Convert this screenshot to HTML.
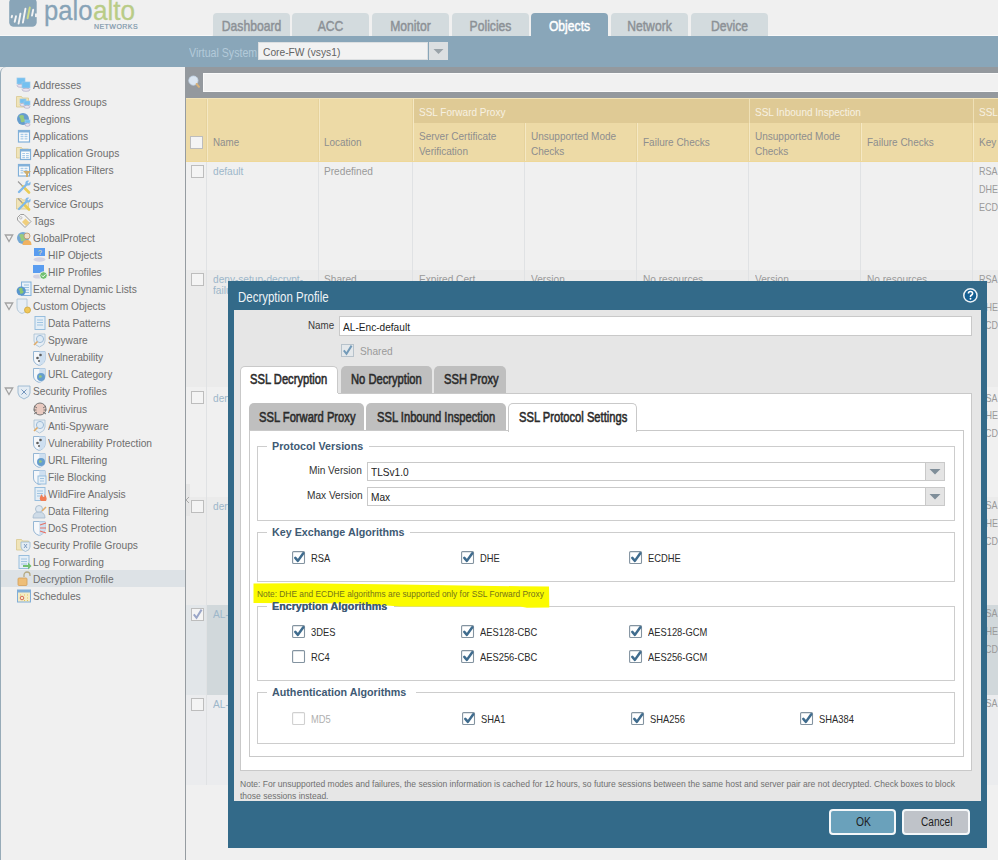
<!DOCTYPE html>
<html><head><meta charset="utf-8"><style>
html,body{margin:0;padding:0;width:998px;height:860px;overflow:hidden;background:#f0f0f0;}
body{position:relative;font-family:"Liberation Sans", sans-serif;}
.r{position:absolute;}
.t{position:absolute;white-space:nowrap;transform-origin:0 0;font-family:"Liberation Sans", sans-serif;}
</style></head><body>
<div class="r" style="left:0px;top:0px;width:998px;height:860px;background:#f0f0f0;"></div>
<svg class="r" style="left:0;top:0" width="150" height="34" viewBox="0 0 150 34">
<rect x="9.2" y="-2" width="27.5" height="28.7" rx="4.5" fill="#89a5b8"/>
<g stroke="#f4f4f4" stroke-width="1.9" stroke-linecap="round">
<line x1="11.6" y1="17.4" x2="12.1" y2="15.8"/>
<line x1="14.7" y1="21.8" x2="16" y2="16.2"/>
<line x1="18.6" y1="23.6" x2="20.4" y2="13.8"/>
<line x1="22.9" y1="22.6" x2="25.4" y2="8.8"/>
<line x1="32" y1="15.6" x2="33.2" y2="9.8"/>
</g>
<line x1="27.6" y1="18.2" x2="29.8" y2="7.5" stroke="#cfdc86" stroke-width="1.9" stroke-linecap="round"/>
<rect x="35" y="13.5" width="3" height="3.6" fill="#f0f0f0"/>
</svg>
<div class="t" style="left:43.8px;top:-2.78px;font-size:27.5px;line-height:27.5px;color:#87a3b7;font-weight:normal;transform:scaleX(0.93);-webkit-text-stroke:0.3px #87a3b7;">palo</div>
<div class="t" style="left:93.0px;top:-2.78px;font-size:27.5px;line-height:27.5px;color:#b9cc87;font-weight:normal;transform:scaleX(0.95);-webkit-text-stroke:0.3px #b9cc87;">alto</div>
<div class="t" style="left:94.0px;top:23.27px;font-size:7px;line-height:7px;color:#7f98ab;font-weight:normal;transform:scaleX(1.0);letter-spacing:0.45px;-webkit-text-stroke:0.2px #7f98ab;">NETWORKS</div>
<div class="r" style="left:212.5px;top:13px;width:77px;height:24px;background:#d3dbde;border-radius:4px 4px 0 0;"></div>
<div class="t" style="left:212.5px;top:18.2px;width:77px;text-align:center;font-size:15px;line-height:15px;color:#8c9196;font-weight:normal;-webkit-text-stroke:0.5px #8c9196;transform:scaleX(0.81);transform-origin:center;">Dashboard</div>
<div class="r" style="left:292.2px;top:13px;width:77px;height:24px;background:#d3dbde;border-radius:4px 4px 0 0;"></div>
<div class="t" style="left:292.2px;top:18.2px;width:77px;text-align:center;font-size:15px;line-height:15px;color:#8c9196;font-weight:normal;-webkit-text-stroke:0.5px #8c9196;transform:scaleX(0.81);transform-origin:center;">ACC</div>
<div class="r" style="left:371.8px;top:13px;width:77px;height:24px;background:#d3dbde;border-radius:4px 4px 0 0;"></div>
<div class="t" style="left:371.8px;top:18.2px;width:77px;text-align:center;font-size:15px;line-height:15px;color:#8c9196;font-weight:normal;-webkit-text-stroke:0.5px #8c9196;transform:scaleX(0.81);transform-origin:center;">Monitor</div>
<div class="r" style="left:451.5px;top:13px;width:77px;height:24px;background:#d3dbde;border-radius:4px 4px 0 0;"></div>
<div class="t" style="left:451.5px;top:18.2px;width:77px;text-align:center;font-size:15px;line-height:15px;color:#8c9196;font-weight:normal;-webkit-text-stroke:0.5px #8c9196;transform:scaleX(0.81);transform-origin:center;">Policies</div>
<div class="r" style="left:531.2px;top:13px;width:77px;height:24px;background:#89a6b9;border-radius:4px 4px 0 0;"></div>
<div class="t" style="left:531.2px;top:18.2px;width:77px;text-align:center;font-size:15px;line-height:15px;color:#ffffff;font-weight:normal;-webkit-text-stroke:0.5px #ffffff;transform:scaleX(0.81);transform-origin:center;">Objects</div>
<div class="r" style="left:610.9px;top:13px;width:77px;height:24px;background:#d3dbde;border-radius:4px 4px 0 0;"></div>
<div class="t" style="left:610.9px;top:18.2px;width:77px;text-align:center;font-size:15px;line-height:15px;color:#8c9196;font-weight:normal;-webkit-text-stroke:0.5px #8c9196;transform:scaleX(0.81);transform-origin:center;">Network</div>
<div class="r" style="left:690.5px;top:13px;width:77px;height:24px;background:#d3dbde;border-radius:4px 4px 0 0;"></div>
<div class="t" style="left:690.5px;top:18.2px;width:77px;text-align:center;font-size:15px;line-height:15px;color:#8c9196;font-weight:normal;-webkit-text-stroke:0.5px #8c9196;transform:scaleX(0.81);transform-origin:center;">Device</div>
<div class="r" style="left:0px;top:35px;width:212px;height:1px;background:#f8f8f8;"></div>
<div class="r" style="left:768px;top:35px;width:230px;height:1px;background:#f8f8f8;"></div>
<div class="r" style="left:0px;top:36px;width:998px;height:31px;background:#89a6b9;"></div>
<div class="t" style="left:188.5px;top:45.50px;font-size:13px;line-height:13px;color:#b3cad9;font-weight:normal;transform:scaleX(0.815);">Virtual System</div>
<div class="r" style="left:258px;top:42px;width:170px;height:18px;background:#f2f2f2;border:1px solid #dcdfe1;box-sizing:border-box;"></div>
<div class="t" style="left:262.5px;top:46.69px;font-size:11px;line-height:11px;color:#646464;font-weight:normal;transform:scaleX(0.93);">Core-FW (vsys1)</div>
<div class="r" style="left:429px;top:42px;width:19px;height:18px;background:#dcdfe1;"></div>
<svg class="r" style="left:429px;top:42px" width="19" height="18"><path d="M4.5 7 L14.5 7 L9.5 12 Z" fill="#9aa3a9"/></svg>
<div class="r" style="left:0;top:67px;width:185px;height:800px;background:#f0f0f0;border-left:1.5px solid #97abb8;border-top-left-radius:6px;box-sizing:border-box;"></div>
<div class="r" style="left:1px;top:570px;width:184px;height:17px;background:#dde2e6;"></div>
<svg class="r" style="left:16px;top:76.7px;opacity:0.85" width="16" height="16" viewBox="0 0 16 16"><rect x="1" y="1" width="8" height="6" fill="#5fb8f0" stroke="#8cc4ea" stroke-width="0.7"/><ellipse cx="5.0" cy="8.8" rx="4.0" ry="1.5" fill="#e6e2f0" stroke="#9a93b8" stroke-width="0.6"/><rect x="6" y="5" width="8" height="6" fill="#5fb8f0" stroke="#8cc4ea" stroke-width="0.7"/><ellipse cx="10.0" cy="12.8" rx="4.0" ry="1.5" fill="#e6e2f0" stroke="#9a93b8" stroke-width="0.6"/></svg>
<div class="t" style="left:33.3px;top:79.59px;font-size:11px;line-height:11px;color:#6e6e6e;font-weight:normal;transform:scaleX(0.928);">Addresses</div>
<svg class="r" style="left:16px;top:93.8px;opacity:0.85" width="16" height="16" viewBox="0 0 16 16"><path d="M0.5 2.5 h5 l1 1.5 h6 v9 h-12 z" fill="#f1e3b0" stroke="#d6c27e" stroke-width="0.8"/><rect x="4" y="5" width="6" height="4" fill="#5fb8f0" stroke="#8cc4ea" stroke-width="0.7"/><ellipse cx="7.0" cy="10.8" rx="3.0" ry="1.5" fill="#e6e2f0" stroke="#9a93b8" stroke-width="0.6"/><rect x="8" y="7" width="6" height="4" fill="#5fb8f0" stroke="#8cc4ea" stroke-width="0.7"/><ellipse cx="11.0" cy="12.8" rx="3.0" ry="1.5" fill="#e6e2f0" stroke="#9a93b8" stroke-width="0.6"/></svg>
<div class="t" style="left:33.3px;top:96.64px;font-size:11px;line-height:11px;color:#6e6e6e;font-weight:normal;transform:scaleX(0.928);">Address Groups</div>
<svg class="r" style="left:16px;top:110.8px;opacity:0.85" width="16" height="16" viewBox="0 0 16 16"><circle cx="7" cy="8" r="6" fill="#4f8fc8"/><path d="M3 5 q3 -2 5 0 q-1 3 2 4 q-2 3 -5 2 q0 -3 -2 -6z" fill="#88c46a"/><rect x="9" y="9" width="5" height="3" fill="#5fb8f0" stroke="#8cc4ea" stroke-width="0.7"/><ellipse cx="11.5" cy="13.8" rx="2.5" ry="1.5" fill="#e6e2f0" stroke="#9a93b8" stroke-width="0.6"/></svg>
<div class="t" style="left:33.3px;top:113.69px;font-size:11px;line-height:11px;color:#6e6e6e;font-weight:normal;transform:scaleX(0.928);">Regions</div>
<svg class="r" style="left:16px;top:127.9px;opacity:0.85" width="16" height="16" viewBox="0 0 16 16"><rect x="2.5" y="2.5" width="11" height="11.5" fill="#ffffff" stroke="#6ea5d5" stroke-width="1.2"/><rect x="2.5" y="2.5" width="11" height="2" fill="#6ea5d5"/><path d="M4.5 6.5h3M8.5 6.5h3M4.5 8.7h3M8.5 8.7h3M4.5 10.9h3M8.5 10.9h3" stroke="#9cc5e8" stroke-width="1.3"/></svg>
<div class="t" style="left:33.3px;top:130.74px;font-size:11px;line-height:11px;color:#6e6e6e;font-weight:normal;transform:scaleX(0.928);">Applications</div>
<svg class="r" style="left:16px;top:144.9px;opacity:0.85" width="16" height="16" viewBox="0 0 16 16"><path d="M0.5 2.5 h5 l1 1.5 h6 v9 h-12 z" fill="#f1e3b0" stroke="#d6c27e" stroke-width="0.8"/><rect x="4.5" y="4.5" width="10" height="10" fill="#ffffff" stroke="#6ea5d5" stroke-width="1.2"/><rect x="4.5" y="4.5" width="10" height="2" fill="#6ea5d5"/><path d="M6.3 8.5h2.8M10 8.5h2.8M6.3 10.6h2.8M10 10.6h2.8M6.3 12.7h2.8M10 12.7h2.8" stroke="#9cc5e8" stroke-width="1.2"/></svg>
<div class="t" style="left:33.3px;top:147.79px;font-size:11px;line-height:11px;color:#6e6e6e;font-weight:normal;transform:scaleX(0.928);">Application Groups</div>
<svg class="r" style="left:16px;top:161.9px;opacity:0.85" width="16" height="16" viewBox="0 0 16 16"><rect x="2.5" y="2.5" width="11" height="11.5" fill="#ffffff" stroke="#6ea5d5" stroke-width="1.2"/><rect x="2.5" y="2.5" width="11" height="2" fill="#6ea5d5"/><path d="M4.5 6.5h3M8.5 6.5h3M4.5 8.7h3M8.5 8.7h3M4.5 10.9h3M8.5 10.9h3" stroke="#9cc5e8" stroke-width="1.3"/><path d="M7 9 h8 l-3 3 v3 h-2 v-3 z" fill="#c9a35a"/></svg>
<div class="t" style="left:33.3px;top:164.84px;font-size:11px;line-height:11px;color:#6e6e6e;font-weight:normal;transform:scaleX(0.928);">Application Filters</div>
<svg class="r" style="left:16px;top:179.0px;opacity:0.85" width="16" height="16" viewBox="0 0 16 16"><path d="M2 2.5 l5 5" stroke="#8a8a8a" stroke-width="1.1"/><path d="M7 7.5 l6 6" stroke="#e8c63a" stroke-width="2.6" stroke-linecap="round"/><path d="M12.5 3.5 l-9.5 9.5" stroke="#6eb0e8" stroke-width="2.4" stroke-linecap="round"/><circle cx="12" cy="4" r="2.6" fill="#6eb0e8"/><path d="M12 4 l2.5 -2.5" stroke="#f0f0f0" stroke-width="1.4"/></svg>
<div class="t" style="left:33.3px;top:181.89px;font-size:11px;line-height:11px;color:#6e6e6e;font-weight:normal;transform:scaleX(0.928);">Services</div>
<svg class="r" style="left:16px;top:196.1px;opacity:0.85" width="16" height="16" viewBox="0 0 16 16"><path d="M0.5 2.5 h5 l1 1.5 h6 v9 h-12 z" fill="#f1e3b0" stroke="#d6c27e" stroke-width="0.8"/><path d="M2 2.5 l5 5" stroke="#8a8a8a" stroke-width="1.1"/><path d="M7 7.5 l6 6" stroke="#e8c63a" stroke-width="2.6" stroke-linecap="round"/><path d="M12.5 3.5 l-9.5 9.5" stroke="#6eb0e8" stroke-width="2.4" stroke-linecap="round"/><circle cx="12" cy="4" r="2.6" fill="#6eb0e8"/><path d="M12 4 l2.5 -2.5" stroke="#f0f0f0" stroke-width="1.4"/></svg>
<div class="t" style="left:33.3px;top:198.94px;font-size:11px;line-height:11px;color:#6e6e6e;font-weight:normal;transform:scaleX(0.928);">Service Groups</div>
<svg class="r" style="left:16px;top:213.1px;opacity:0.85" width="16" height="16" viewBox="0 0 16 16"><path d="M1.5 4.5 l3-3 h3.5 l7 7 -6 6 -7.5-7.5 z" fill="#f4f4f4" stroke="#8f8f8f" stroke-width="1"/><path d="M6 9 l3.5-3.5 l4 4 -3.5 3.5 z" fill="#f0c968"/><circle cx="4.8" cy="4.8" r="1.2" fill="#fff" stroke="#999" stroke-width="0.7"/></svg>
<div class="t" style="left:33.3px;top:215.99px;font-size:11px;line-height:11px;color:#6e6e6e;font-weight:normal;transform:scaleX(0.928);">Tags</div>
<svg class="r" style="left:16px;top:230.2px;opacity:0.85" width="16" height="16" viewBox="0 0 16 16"><circle cx="7" cy="8" r="6" fill="#5f9bd0"/><path d="M3 5 q3 -2 5 0 q-1 3 2 4 q-2 3 -5 2 q0 -3 -2 -6z" fill="#8cc56a"/><circle cx="11" cy="6" r="3" fill="#f2dcc0" stroke="#b48b5c" stroke-width="0.9"/><path d="M6.5 15 q0 -5 4.5 -5 q4.5 0 4.5 5z" fill="#f0a848"/></svg>
<svg class="r" style="left:4px;top:232.9px" width="10" height="10" viewBox="0 0 10 10"><path d="M1.3 2 L8.7 2 L5 8.5 Z" fill="none" stroke="#a2a2a2" stroke-width="1.3"/></svg>
<div class="t" style="left:33.3px;top:233.04px;font-size:11px;line-height:11px;color:#6e6e6e;font-weight:normal;transform:scaleX(0.928);">GlobalProtect</div>
<svg class="r" style="left:32px;top:247.2px;opacity:0.85" width="16" height="16" viewBox="0 0 16 16"><rect x="2" y="1" width="11" height="8" fill="#3f8ef0"/><text x="6" y="7.5" font-size="7" fill="#ffe680" font-family="Liberation Sans">?</text><ellipse cx="7.5" cy="12.5" rx="6" ry="2.2" fill="#cfcde0"/></svg>
<div class="t" style="left:48.4px;top:250.09px;font-size:11px;line-height:11px;color:#6e6e6e;font-weight:normal;transform:scaleX(0.928);">HIP Objects</div>
<svg class="r" style="left:32px;top:264.2px;opacity:0.85" width="16" height="16" viewBox="0 0 16 16"><rect x="1" y="1" width="11" height="8" fill="#3f8ef0"/><ellipse cx="6" cy="12.5" rx="5" ry="2" fill="#cfcde0"/><circle cx="11.5" cy="11.5" r="3.8" fill="#5cb85c" stroke="#fff" stroke-width="0.8"/><path d="M9.8 11.5 l1.3 1.3 2.3-2.4" stroke="#fff" stroke-width="1" fill="none"/></svg>
<div class="t" style="left:48.4px;top:267.14px;font-size:11px;line-height:11px;color:#6e6e6e;font-weight:normal;transform:scaleX(0.928);">HIP Profiles</div>
<svg class="r" style="left:16px;top:281.3px;opacity:0.85" width="16" height="16" viewBox="0 0 16 16"><rect x="5.5" y="1" width="9.5" height="13.5" fill="#e8f2fb" stroke="#6fa6d6" stroke-width="1"/><path d="M8 4h5M8 6.5h5M8 9h5M8 11.5h5" stroke="#7fb0d8" stroke-width="0.9"/><circle cx="5.2" cy="10" r="4.6" fill="#3f86c8"/><path d="M2.5 8 q2 -2 4 -0.5 q-0.5 2.5 1.5 3 q-1.5 3 -4 2 q0.5 -2.5 -1.5 -4.5z" fill="#7cc05a"/></svg>
<div class="t" style="left:33.3px;top:284.19px;font-size:11px;line-height:11px;color:#6e6e6e;font-weight:normal;transform:scaleX(0.928);">External Dynamic Lists</div>
<svg class="r" style="left:16px;top:298.3px;opacity:0.85" width="16" height="16" viewBox="0 0 16 16"><path d="M1 1 h10 v8 q0 5 -5 6.5 q-5 -1.5 -5 -6.5 z" fill="#e6eef6" stroke="#9bb8cf" stroke-width="0.8"/><circle cx="11.5" cy="12" r="3" fill="#f0c040" stroke="#c89a20" stroke-width="0.8"/></svg>
<svg class="r" style="left:4px;top:301.0px" width="10" height="10" viewBox="0 0 10 10"><path d="M1.3 2 L8.7 2 L5 8.5 Z" fill="none" stroke="#a2a2a2" stroke-width="1.3"/></svg>
<div class="t" style="left:33.3px;top:301.24px;font-size:11px;line-height:11px;color:#6e6e6e;font-weight:normal;transform:scaleX(0.928);">Custom Objects</div>
<svg class="r" style="left:32px;top:315.4px;opacity:0.85" width="16" height="16" viewBox="0 0 16 16"><rect x="3" y="1.5" width="10" height="13" fill="#e3eef8" stroke="#7fb0d8" stroke-width="0.9"/><path d="M5 5h6M5 7.5h6M5 10h6" stroke="#7fb0d8" stroke-width="0.8"/></svg>
<div class="t" style="left:48.4px;top:318.29px;font-size:11px;line-height:11px;color:#6e6e6e;font-weight:normal;transform:scaleX(0.928);">Data Patterns</div>
<svg class="r" style="left:32px;top:332.4px;opacity:0.85" width="16" height="16" viewBox="0 0 16 16"><path d="M2 2 h11 v7 q0 4 -5.5 6 q-5.5 -2 -5.5 -6 z" fill="#e6eef6" stroke="#9bb8cf" stroke-width="0.8"/><circle cx="8" cy="7" r="3.6" fill="#dce9f5" stroke="#8fb3d3" stroke-width="1"/><path d="M5.5 9.5 l-3.5 3.5" stroke="#e0a050" stroke-width="1.6"/></svg>
<div class="t" style="left:48.4px;top:335.34px;font-size:11px;line-height:11px;color:#6e6e6e;font-weight:normal;transform:scaleX(0.928);">Spyware</div>
<svg class="r" style="left:32px;top:349.5px;opacity:0.85" width="16" height="16" viewBox="0 0 16 16"><path d="M1.5 1.5 h11.5 v7.5 q0 4.5 -5.75 6.5 q-5.75 -2 -5.75 -6.5 z" fill="#f6f9fc" stroke="#86acd0" stroke-width="1"/><path d="M7.25 1.5 h5.75 v7.5 q0 4.5 -5.75 6.5 z" fill="#c9ddf1"/><circle cx="5.5" cy="8" r="1.3" fill="#444"/><circle cx="8.5" cy="5" r="1.3" fill="#444"/><circle cx="7" cy="11" r="1" fill="#444"/></svg>
<div class="t" style="left:48.4px;top:352.39px;font-size:11px;line-height:11px;color:#6e6e6e;font-weight:normal;transform:scaleX(0.928);">Vulnerability</div>
<svg class="r" style="left:32px;top:366.6px;opacity:0.85" width="16" height="16" viewBox="0 0 16 16"><path d="M1.5 1.5 h11.5 v7.5 q0 4.5 -5.75 6.5 q-5.75 -2 -5.75 -6.5 z" fill="#f6f9fc" stroke="#86acd0" stroke-width="1"/><path d="M7.25 1.5 h5.75 v7.5 q0 4.5 -5.75 6.5 z" fill="#c9ddf1"/><circle cx="9" cy="10" r="4" fill="#4f8fc8"/><path d="M7 8.5 q2 -1 3 1 q-1 2 -3 1z" fill="#88c46a"/></svg>
<div class="t" style="left:48.4px;top:369.44px;font-size:11px;line-height:11px;color:#6e6e6e;font-weight:normal;transform:scaleX(0.928);">URL Category</div>
<svg class="r" style="left:16px;top:383.6px;opacity:0.85" width="16" height="16" viewBox="0 0 16 16"><path d="M2 2 h12 v7 q0 4 -6 6 q-6 -2 -6 -6 z" fill="#e2ecf4" stroke="#8aaecb" stroke-width="0.9"/><path d="M5.5 5.5 l5 5 M10.5 5.5 l-5 5" stroke="#5f86b4" stroke-width="1"/></svg>
<svg class="r" style="left:4px;top:386.3px" width="10" height="10" viewBox="0 0 10 10"><path d="M1.3 2 L8.7 2 L5 8.5 Z" fill="none" stroke="#a2a2a2" stroke-width="1.3"/></svg>
<div class="t" style="left:33.3px;top:386.49px;font-size:11px;line-height:11px;color:#6e6e6e;font-weight:normal;transform:scaleX(0.928);">Security Profiles</div>
<svg class="r" style="left:32px;top:400.6px;opacity:0.85" width="16" height="16" viewBox="0 0 16 16"><circle cx="8" cy="8" r="6" fill="#e8c4b8" stroke="#555" stroke-width="0.9"/><path d="M2 5 l3 2 M14 5 l-3 2 M1.5 9 h3 M14.5 9 h-3 M2 13 l3 -2 M14 13 l-3 -2" stroke="#555" stroke-width="0.9"/></svg>
<div class="t" style="left:48.4px;top:403.54px;font-size:11px;line-height:11px;color:#6e6e6e;font-weight:normal;transform:scaleX(0.928);">Antivirus</div>
<svg class="r" style="left:32px;top:417.7px;opacity:0.85" width="16" height="16" viewBox="0 0 16 16"><path d="M2 2 h11 v7 q0 4 -5.5 6 q-5.5 -2 -5.5 -6 z" fill="#e6eef6" stroke="#9bb8cf" stroke-width="0.8"/><circle cx="8" cy="7" r="3.6" fill="#dce9f5" stroke="#8fb3d3" stroke-width="1"/><path d="M5.5 9.5 l-3.5 3.5" stroke="#e0a050" stroke-width="1.6"/></svg>
<div class="t" style="left:48.4px;top:420.59px;font-size:11px;line-height:11px;color:#6e6e6e;font-weight:normal;transform:scaleX(0.928);">Anti-Spyware</div>
<svg class="r" style="left:32px;top:434.8px;opacity:0.85" width="16" height="16" viewBox="0 0 16 16"><path d="M1.5 1.5 h11.5 v7.5 q0 4.5 -5.75 6.5 q-5.75 -2 -5.75 -6.5 z" fill="#f6f9fc" stroke="#86acd0" stroke-width="1"/><path d="M7.25 1.5 h5.75 v7.5 q0 4.5 -5.75 6.5 z" fill="#c9ddf1"/><circle cx="5.5" cy="8" r="1.3" fill="#444"/><circle cx="8.5" cy="5" r="1.3" fill="#444"/><circle cx="7" cy="11" r="1" fill="#444"/></svg>
<div class="t" style="left:48.4px;top:437.64px;font-size:11px;line-height:11px;color:#6e6e6e;font-weight:normal;transform:scaleX(0.928);">Vulnerability Protection</div>
<svg class="r" style="left:32px;top:451.8px;opacity:0.85" width="16" height="16" viewBox="0 0 16 16"><path d="M1.5 1.5 h11.5 v7.5 q0 4.5 -5.75 6.5 q-5.75 -2 -5.75 -6.5 z" fill="#f6f9fc" stroke="#86acd0" stroke-width="1"/><path d="M7.25 1.5 h5.75 v7.5 q0 4.5 -5.75 6.5 z" fill="#c9ddf1"/><circle cx="9" cy="10" r="4" fill="#4f8fc8"/><path d="M7 8.5 q2 -1 3 1 q-1 2 -3 1z" fill="#88c46a"/></svg>
<div class="t" style="left:48.4px;top:454.69px;font-size:11px;line-height:11px;color:#6e6e6e;font-weight:normal;transform:scaleX(0.928);">URL Filtering</div>
<svg class="r" style="left:32px;top:468.9px;opacity:0.85" width="16" height="16" viewBox="0 0 16 16"><path d="M1.5 1.5 h11.5 v7.5 q0 4.5 -5.75 6.5 q-5.75 -2 -5.75 -6.5 z" fill="#f6f9fc" stroke="#86acd0" stroke-width="1"/><path d="M7.25 1.5 h5.75 v7.5 q0 4.5 -5.75 6.5 z" fill="#c9ddf1"/><rect x="6" y="7" width="8" height="8" fill="#e3eef8" stroke="#7fb0d8" stroke-width="0.9"/><path d="M8 9.5h4M8 12h4" stroke="#7fb0d8" stroke-width="0.8"/></svg>
<div class="t" style="left:48.4px;top:471.74px;font-size:11px;line-height:11px;color:#6e6e6e;font-weight:normal;transform:scaleX(0.928);">File Blocking</div>
<svg class="r" style="left:32px;top:485.9px;opacity:0.85" width="16" height="16" viewBox="0 0 16 16"><rect x="3" y="1.5" width="10" height="13" fill="#e3eef8" stroke="#7fb0d8" stroke-width="0.9"/><path d="M5 5h6M5 7.5h6M5 10h6" stroke="#7fb0d8" stroke-width="0.8"/><path d="M9 15 q-3 -3 1 -7 q0 3 2 3 q1 -1 0 -3 q4 3 2 7z" fill="#f26a3a"/></svg>
<div class="t" style="left:48.4px;top:488.79px;font-size:11px;line-height:11px;color:#6e6e6e;font-weight:normal;transform:scaleX(0.928);">WildFire Analysis</div>
<svg class="r" style="left:32px;top:502.9px;opacity:0.85" width="16" height="16" viewBox="0 0 16 16"><circle cx="7" cy="6" r="3.5" fill="#dbe6f0" stroke="#98b0c6" stroke-width="0.9"/><path d="M1 15 q0 -6 6 -6 q6 0 6 6z" fill="#c9d8e6" stroke="#98b0c6" stroke-width="0.8"/><path d="M10 8 l4 -4" stroke="#e0a050" stroke-width="1.5"/></svg>
<div class="t" style="left:48.4px;top:505.84px;font-size:11px;line-height:11px;color:#6e6e6e;font-weight:normal;transform:scaleX(0.928);">Data Filtering</div>
<svg class="r" style="left:32px;top:520.0px;opacity:0.85" width="16" height="16" viewBox="0 0 16 16"><path d="M1.5 1.5 h11.5 v7.5 q0 4.5 -5.75 6.5 q-5.75 -2 -5.75 -6.5 z" fill="#f6f9fc" stroke="#86acd0" stroke-width="1"/><path d="M7.25 1.5 h5.75 v7.5 q0 4.5 -5.75 6.5 z" fill="#c9ddf1"/><path d="M8 5 l6 -2 M8 8 l6 0 M8 11 l6 2" stroke="#e85a4a" stroke-width="1.1"/></svg>
<div class="t" style="left:48.4px;top:522.89px;font-size:11px;line-height:11px;color:#6e6e6e;font-weight:normal;transform:scaleX(0.928);">DoS Protection</div>
<svg class="r" style="left:16px;top:537.1px;opacity:0.85" width="16" height="16" viewBox="0 0 16 16"><path d="M0.5 2.5 h5 l1 1.5 h6 v9 h-12 z" fill="#f1e3b0" stroke="#d6c27e" stroke-width="0.8"/><path d="M5 5 h9 v5 q0 3 -4.5 4.5 q-4.5 -1.5 -4.5 -4.5 z" fill="#e2ecf4" stroke="#8aaecb" stroke-width="0.8"/><path d="M8 7 l3 4 M11 7 l-3 4" stroke="#5f86b4" stroke-width="0.9"/></svg>
<div class="t" style="left:33.3px;top:539.94px;font-size:11px;line-height:11px;color:#6e6e6e;font-weight:normal;transform:scaleX(0.928);">Security Profile Groups</div>
<svg class="r" style="left:16px;top:554.1px;opacity:0.85" width="16" height="16" viewBox="0 0 16 16"><rect x="3" y="1.5" width="10" height="13" fill="#e3eef8" stroke="#7fb0d8" stroke-width="0.9"/><path d="M5 5h6M5 7.5h6M5 10h6" stroke="#7fb0d8" stroke-width="0.8"/><path d="M7 11 h5 v-2.5 l3.5 3.5 -3.5 3.5 v-2.5 h-5z" fill="#5cb85c"/></svg>
<div class="t" style="left:33.3px;top:556.99px;font-size:11px;line-height:11px;color:#6e6e6e;font-weight:normal;transform:scaleX(0.928);">Log Forwarding</div>
<svg class="r" style="left:16px;top:571.2px;opacity:0.85" width="16" height="16" viewBox="0 0 16 16"><path d="M8 6 v-2 a3 3 0 0 1 6 0 v1" stroke="#b0a070" stroke-width="1.3" fill="none"/><rect x="2" y="7" width="9" height="7.5" rx="1" fill="#f1b865" stroke="#d29443" stroke-width="0.8"/></svg>
<div class="t" style="left:33.3px;top:574.04px;font-size:11px;line-height:11px;color:#6e6e6e;font-weight:normal;transform:scaleX(0.928);">Decryption Profile</div>
<svg class="r" style="left:16px;top:588.2px;opacity:0.85" width="16" height="16" viewBox="0 0 16 16"><rect x="1.5" y="2" width="13" height="12" fill="#f5ebc0" stroke="#6ea3d4" stroke-width="1"/><rect x="1.5" y="2" width="13" height="2.5" fill="#6ea3d4"/><circle cx="6" cy="10" r="1.8" fill="none" stroke="#d0503a" stroke-width="1"/><path d="M4 7h1M8 7h1M11 7h1M11 10h1M8 12.5h1M11 12.5h1" stroke="#e0c040" stroke-width="1"/></svg>
<div class="t" style="left:33.3px;top:591.09px;font-size:11px;line-height:11px;color:#6e6e6e;font-weight:normal;transform:scaleX(0.928);">Schedules</div>
<div class="r" style="left:185px;top:67px;width:813px;height:31px;background:#94999e;"></div>
<div class="r" style="left:203px;top:73px;width:800px;height:19px;background:#f1f1f1;border:1px solid #fafafa;box-sizing:border-box;"></div>
<svg class="r" style="left:186px;top:73px" width="16" height="18" viewBox="0 0 16 18"><circle cx="7.4" cy="7.6" r="4.6" fill="#dbe6f1" stroke="#c4d6e8" stroke-width="0.8"/><path d="M10.6 11 L13 13.8" stroke="#d9b27a" stroke-width="2" stroke-linecap="round"/></svg>
<div class="r" style="left:185px;top:98px;width:813px;height:762px;background:#f0f0f0;"></div>
<div class="r" style="left:186px;top:162px;width:812px;height:108px;background:#f0f0f0;"></div>
<div class="r" style="left:186px;top:270px;width:812px;height:117px;background:#ebebeb;"></div>
<div class="r" style="left:186px;top:387px;width:812px;height:110px;background:#f0f0f0;"></div>
<div class="r" style="left:186px;top:497px;width:812px;height:108px;background:#ebebeb;"></div>
<div class="r" style="left:186px;top:605px;width:812px;height:90px;background:#d1d8db;"></div>
<div class="r" style="left:186px;top:695px;width:812px;height:90px;background:#ebecee;"></div>
<div class="r" style="left:186px;top:605px;width:21px;height:90px;background:#e2e6e9;"></div>
<div class="r" style="left:206px;top:162px;width:1px;height:623px;background:#e0e2e4;"></div>
<div class="r" style="left:318px;top:162px;width:1px;height:623px;background:#e0e2e4;"></div>
<div class="r" style="left:412px;top:162px;width:1px;height:623px;background:#e0e2e4;"></div>
<div class="r" style="left:524px;top:162px;width:1px;height:623px;background:#e0e2e4;"></div>
<div class="r" style="left:636px;top:162px;width:1px;height:623px;background:#e0e2e4;"></div>
<div class="r" style="left:748px;top:162px;width:1px;height:623px;background:#e0e2e4;"></div>
<div class="r" style="left:860px;top:162px;width:1px;height:623px;background:#e0e2e4;"></div>
<div class="r" style="left:972px;top:162px;width:1px;height:623px;background:#e0e2e4;"></div>
<div class="r" style="left:185px;top:98px;width:1px;height:762px;background:#969ca1;"></div>
<div class="r" style="left:186px;top:98px;width:812px;height:64px;background:#eddaa6;"></div>
<div class="r" style="left:413px;top:99px;width:585px;height:24px;background:#dfca95;"></div>
<div class="r" style="left:207px;top:99px;width:1px;height:63px;background:#f5e8c3;"></div>
<div class="r" style="left:319px;top:99px;width:1px;height:63px;background:#f5e8c3;"></div>
<div class="r" style="left:413px;top:99px;width:1px;height:63px;background:#f5e8c3;"></div>
<div class="r" style="left:525px;top:123px;width:1px;height:39px;background:#f5e8c3;"></div>
<div class="r" style="left:637px;top:123px;width:1px;height:39px;background:#f5e8c3;"></div>
<div class="r" style="left:749px;top:123px;width:1px;height:39px;background:#f5e8c3;"></div>
<div class="r" style="left:861px;top:123px;width:1px;height:39px;background:#f5e8c3;"></div>
<div class="r" style="left:973px;top:123px;width:1px;height:39px;background:#f5e8c3;"></div>
<div class="r" style="left:749px;top:99px;width:1px;height:24px;background:#efe0b6;"></div>
<div class="r" style="left:973px;top:99px;width:1px;height:24px;background:#efe0b6;"></div>
<div class="r" style="left:186px;top:98px;width:812px;height:1px;background:#f3e4b8;"></div>
<div class="r" style="left:186px;top:161px;width:812px;height:1px;background:#efd898;"></div>
<div class="r" style="left:206px;top:99px;width:1px;height:62px;background:#e6d29c;"></div>
<div class="r" style="left:318px;top:99px;width:1px;height:62px;background:#e6d29c;"></div>
<div class="r" style="left:412px;top:99px;width:1px;height:62px;background:#e6d29c;"></div>
<div class="r" style="left:524px;top:123px;width:1px;height:38px;background:#e6d29c;"></div>
<div class="r" style="left:636px;top:123px;width:1px;height:38px;background:#e6d29c;"></div>
<div class="r" style="left:748px;top:123px;width:1px;height:38px;background:#e6d29c;"></div>
<div class="r" style="left:860px;top:123px;width:1px;height:38px;background:#e6d29c;"></div>
<div class="r" style="left:972px;top:123px;width:1px;height:38px;background:#e6d29c;"></div>
<svg class="r" style="left:190px;top:135.5px" width="13" height="13" viewBox="0 0 13 13"><rect x="0.5" y="0.5" width="12" height="12" fill="#f4f4f4" stroke="#bdbdbd" stroke-width="1"/></svg>
<div class="t" style="left:212.8px;top:137.09px;font-size:11px;line-height:11px;color:#8e8e8e;font-weight:normal;transform:scaleX(0.89);">Name</div>
<div class="t" style="left:323.8px;top:137.09px;font-size:11px;line-height:11px;color:#8e8e8e;font-weight:normal;transform:scaleX(0.9);">Location</div>
<div class="t" style="left:419.0px;top:106.69px;font-size:11px;line-height:11px;color:#f7f1e2;font-weight:normal;transform:scaleX(0.91);">SSL Forward Proxy</div>
<div class="t" style="left:755.0px;top:106.69px;font-size:11px;line-height:11px;color:#f7f1e2;font-weight:normal;transform:scaleX(0.91);">SSL Inbound Inspection</div>
<div class="t" style="left:978.5px;top:106.69px;font-size:11px;line-height:11px;color:#f7f1e2;font-weight:normal;transform:scaleX(0.91);">SSL</div>
<div class="t" style="left:419.0px;top:131.19px;font-size:11px;line-height:11px;color:#8e8e8e;font-weight:normal;transform:scaleX(0.91);">Server Certificate</div>
<div class="t" style="left:419.0px;top:145.69px;font-size:11px;line-height:11px;color:#8e8e8e;font-weight:normal;transform:scaleX(0.91);">Verification</div>
<div class="t" style="left:531.0px;top:131.19px;font-size:11px;line-height:11px;color:#8e8e8e;font-weight:normal;transform:scaleX(0.91);">Unsupported Mode</div>
<div class="t" style="left:531.0px;top:145.69px;font-size:11px;line-height:11px;color:#8e8e8e;font-weight:normal;transform:scaleX(0.91);">Checks</div>
<div class="t" style="left:643.0px;top:137.09px;font-size:11px;line-height:11px;color:#8e8e8e;font-weight:normal;transform:scaleX(0.91);">Failure Checks</div>
<div class="t" style="left:755.0px;top:131.19px;font-size:11px;line-height:11px;color:#8e8e8e;font-weight:normal;transform:scaleX(0.91);">Unsupported Mode</div>
<div class="t" style="left:755.0px;top:145.69px;font-size:11px;line-height:11px;color:#8e8e8e;font-weight:normal;transform:scaleX(0.91);">Checks</div>
<div class="t" style="left:867.0px;top:137.09px;font-size:11px;line-height:11px;color:#8e8e8e;font-weight:normal;transform:scaleX(0.91);">Failure Checks</div>
<div class="t" style="left:978.5px;top:137.09px;font-size:11px;line-height:11px;color:#8e8e8e;font-weight:normal;transform:scaleX(0.91);">Key</div>
<svg class="r" style="left:190.5px;top:165px" width="13" height="13" viewBox="0 0 13 13"><rect x="0.5" y="0.5" width="12" height="12" fill="#f4f4f4" stroke="#bdbdbd" stroke-width="1"/></svg>
<svg class="r" style="left:190.5px;top:273px" width="13" height="13" viewBox="0 0 13 13"><rect x="0.5" y="0.5" width="12" height="12" fill="#f4f4f4" stroke="#bdbdbd" stroke-width="1"/></svg>
<svg class="r" style="left:190.5px;top:391px" width="13" height="13" viewBox="0 0 13 13"><rect x="0.5" y="0.5" width="12" height="12" fill="#f4f4f4" stroke="#bdbdbd" stroke-width="1"/></svg>
<svg class="r" style="left:190.5px;top:499.5px" width="13" height="13" viewBox="0 0 13 13"><rect x="0.5" y="0.5" width="12" height="12" fill="#f4f4f4" stroke="#bdbdbd" stroke-width="1"/></svg>
<svg class="r" style="left:190.5px;top:608px" width="13" height="13" viewBox="0 0 13 13"><rect x="0.5" y="0.5" width="12" height="12" fill="#f4f4f4" stroke="#bdbdbd" stroke-width="1"/><path d="M2.8 6.3 L5.5 9.8 L10.6 1.6" fill="none" stroke="#9aa6c8" stroke-width="2"/></svg>
<svg class="r" style="left:190.5px;top:698px" width="13" height="13" viewBox="0 0 13 13"><rect x="0.5" y="0.5" width="12" height="12" fill="#f4f4f4" stroke="#bdbdbd" stroke-width="1"/></svg>
<div class="t" style="left:212.5px;top:166.39px;font-size:11px;line-height:11px;color:#9db7ca;font-weight:normal;transform:scaleX(0.92);">default</div>
<div class="t" style="left:323.8px;top:166.39px;font-size:11px;line-height:11px;color:#9a9a9a;font-weight:normal;transform:scaleX(0.92);">Predefined</div>
<div class="t" style="left:978.5px;top:165.99px;font-size:11px;line-height:11px;color:#9a9a9a;font-weight:normal;transform:scaleX(0.82);">RSA</div>
<div class="t" style="left:978.5px;top:184.19px;font-size:11px;line-height:11px;color:#9a9a9a;font-weight:normal;transform:scaleX(0.82);">DHE</div>
<div class="t" style="left:978.5px;top:201.99px;font-size:11px;line-height:11px;color:#9a9a9a;font-weight:normal;transform:scaleX(0.82);">ECDHE</div>
<div class="t" style="left:978.5px;top:273.69px;font-size:11px;line-height:11px;color:#9a9a9a;font-weight:normal;transform:scaleX(0.82);">RSA</div>
<div class="t" style="left:978.5px;top:301.89px;font-size:11px;line-height:11px;color:#9a9a9a;font-weight:normal;transform:scaleX(0.82);">DHE</div>
<div class="t" style="left:978.5px;top:319.69px;font-size:11px;line-height:11px;color:#9a9a9a;font-weight:normal;transform:scaleX(0.82);">ECDHE</div>
<div class="t" style="left:978.5px;top:392.69px;font-size:11px;line-height:11px;color:#9a9a9a;font-weight:normal;transform:scaleX(0.82);">RSA</div>
<div class="t" style="left:978.5px;top:410.49px;font-size:11px;line-height:11px;color:#9a9a9a;font-weight:normal;transform:scaleX(0.82);">DHE</div>
<div class="t" style="left:978.5px;top:428.29px;font-size:11px;line-height:11px;color:#9a9a9a;font-weight:normal;transform:scaleX(0.82);">ECDHE</div>
<div class="t" style="left:978.5px;top:500.49px;font-size:11px;line-height:11px;color:#9a9a9a;font-weight:normal;transform:scaleX(0.82);">RSA</div>
<div class="t" style="left:978.5px;top:518.09px;font-size:11px;line-height:11px;color:#9a9a9a;font-weight:normal;transform:scaleX(0.82);">DHE</div>
<div class="t" style="left:978.5px;top:536.09px;font-size:11px;line-height:11px;color:#9a9a9a;font-weight:normal;transform:scaleX(0.82);">ECDHE</div>
<div class="t" style="left:978.5px;top:608.39px;font-size:11px;line-height:11px;color:#9a9a9a;font-weight:normal;transform:scaleX(0.82);">RSA</div>
<div class="t" style="left:978.5px;top:626.19px;font-size:11px;line-height:11px;color:#9a9a9a;font-weight:normal;transform:scaleX(0.82);">DHE</div>
<div class="t" style="left:978.5px;top:643.99px;font-size:11px;line-height:11px;color:#9a9a9a;font-weight:normal;transform:scaleX(0.82);">ECDHE</div>
<div class="t" style="left:978.5px;top:698.39px;font-size:11px;line-height:11px;color:#9a9a9a;font-weight:normal;transform:scaleX(0.82);">RSA</div>
<div class="t" style="left:212.5px;top:274.19px;font-size:11px;line-height:11px;color:#9db7ca;font-weight:normal;transform:scaleX(0.92);">deny-setup-decrypt-</div>
<div class="t" style="left:212.5px;top:284.99px;font-size:11px;line-height:11px;color:#9db7ca;font-weight:normal;transform:scaleX(0.92);">failure</div>
<div class="t" style="left:323.8px;top:274.19px;font-size:11px;line-height:11px;color:#9a9a9a;font-weight:normal;transform:scaleX(0.92);">Shared</div>
<div class="t" style="left:419.0px;top:274.19px;font-size:11px;line-height:11px;color:#9a9a9a;font-weight:normal;transform:scaleX(0.92);">Expired Cert</div>
<div class="t" style="left:531.0px;top:274.19px;font-size:11px;line-height:11px;color:#9a9a9a;font-weight:normal;transform:scaleX(0.92);">Version</div>
<div class="t" style="left:643.0px;top:274.19px;font-size:11px;line-height:11px;color:#9a9a9a;font-weight:normal;transform:scaleX(0.92);">No resources</div>
<div class="t" style="left:755.0px;top:274.19px;font-size:11px;line-height:11px;color:#9a9a9a;font-weight:normal;transform:scaleX(0.92);">Version</div>
<div class="t" style="left:867.0px;top:274.19px;font-size:11px;line-height:11px;color:#9a9a9a;font-weight:normal;transform:scaleX(0.92);">No resources</div>
<div class="t" style="left:212.5px;top:392.69px;font-size:11px;line-height:11px;color:#9db7ca;font-weight:normal;transform:scaleX(0.92);">deny</div>
<div class="t" style="left:212.5px;top:500.69px;font-size:11px;line-height:11px;color:#9db7ca;font-weight:normal;transform:scaleX(0.92);">deny</div>
<div class="t" style="left:212.5px;top:608.99px;font-size:11px;line-height:11px;color:#9db7ca;font-weight:normal;transform:scaleX(0.92);">AL-Enc</div>
<div class="t" style="left:212.5px;top:698.99px;font-size:11px;line-height:11px;color:#9db7ca;font-weight:normal;transform:scaleX(0.92);">AL-Enc</div>
<div class="r" style="left:186px;top:484px;width:4px;height:32px;background:#e6e6e6;"></div>
<svg class="r" style="left:185px;top:496px" width="5" height="8"><path d="M4 1 L1 4 L4 7" fill="none" stroke="#aaa" stroke-width="1"/></svg>
<div class="r" style="left:228px;top:281px;width:759px;height:567px;background:#336a89;"></div>
<div class="t" style="left:238.0px;top:289.65px;font-size:14px;line-height:14px;color:#eef3f6;font-weight:normal;transform:scaleX(0.82);">Decryption Profile</div>
<svg class="r" style="left:960.5px;top:286px" width="19" height="19" viewBox="0 0 19 19"><circle cx="9.4" cy="9.4" r="6.6" fill="#145f92" stroke="#eef3f7" stroke-width="1.5"/><path d="M7.4 7.6 q0 -2.1 2.1 -2.1 q2.1 0 2.1 1.9 q0 1.2 -1.3 1.8 q-0.8 0.4 -0.8 1.3 v0.4" fill="none" stroke="#fff" stroke-width="1.6"/><circle cx="9.5" cy="12.7" r="0.95" fill="#fff"/></svg>
<div class="r" style="left:234px;top:310px;width:747px;height:491px;background:#e6e6e6;"></div>
<div class="t" style="left:308.0px;top:320.29px;font-size:11px;line-height:11px;color:#3a3a3a;font-weight:normal;transform:scaleX(0.89);">Name</div>
<div class="r" style="left:339px;top:316px;width:633px;height:20px;background:#fff;border:1px solid #c9c9c9;box-sizing:border-box;"></div>
<div class="t" style="left:342.5px;top:321.99px;font-size:11px;line-height:11px;color:#222;font-weight:normal;transform:scaleX(0.92);">AL-Enc-default</div>
<svg class="r" style="left:340.5px;top:343.5px" width="13" height="13" viewBox="0 0 13 13"><rect x="0.5" y="0.5" width="12" height="12" fill="#e4e8eb" stroke="#b7c2cb" stroke-width="1"/><path d="M2.8 6.3 L5.5 9.8 L10.6 1.6" fill="none" stroke="#739ab8" stroke-width="2"/></svg>
<div class="t" style="left:359.7px;top:345.89px;font-size:11px;line-height:11px;color:#9a9a9a;font-weight:normal;transform:scaleX(0.92);">Shared</div>
<div class="r" style="left:240px;top:393px;width:732px;height:378px;background:#fff;border:1px solid #c9c9c9;box-sizing:border-box;"></div>
<div class="r" style="left:240px;top:366px;width:98px;height:29px;background:#fff;border:1px solid #c9c9c9;border-bottom:none;border-radius:5px 5px 0 0;box-sizing:border-box;"></div>
<div class="t" style="left:250.3px;top:371.10px;font-size:15px;line-height:15px;color:#2b2b2b;font-weight:normal;transform:scaleX(0.745);-webkit-text-stroke:0.6px #2b2b2b;">SSL Decryption</div>
<div class="r" style="left:341px;top:366px;width:91px;height:27px;background:#bfbfbf;border-radius:5px 5px 0 0;"></div>
<div class="t" style="left:350.5px;top:371.10px;font-size:15px;line-height:15px;color:#2b2b2b;font-weight:normal;transform:scaleX(0.745);-webkit-text-stroke:0.6px #2b2b2b;">No Decryption</div>
<div class="r" style="left:434px;top:366px;width:72px;height:27px;background:#bfbfbf;border-radius:5px 5px 0 0;"></div>
<div class="t" style="left:444.0px;top:371.10px;font-size:15px;line-height:15px;color:#2b2b2b;font-weight:normal;transform:scaleX(0.745);-webkit-text-stroke:0.6px #2b2b2b;">SSH Proxy</div>
<div class="r" style="left:241px;top:393px;width:97px;height:2px;background:#fff;"></div>
<div class="r" style="left:249px;top:430px;width:715px;height:327px;background:#fff;border:1px solid #c9c9c9;box-sizing:border-box;"></div>
<div class="r" style="left:249px;top:403px;width:115px;height:27px;background:#bfbfbf;border-radius:5px 5px 0 0;"></div>
<div class="t" style="left:259.0px;top:408.80px;font-size:15px;line-height:15px;color:#2b2b2b;font-weight:normal;transform:scaleX(0.745);-webkit-text-stroke:0.6px #2b2b2b;">SSL Forward Proxy</div>
<div class="r" style="left:366px;top:403px;width:140px;height:27px;background:#bfbfbf;border-radius:5px 5px 0 0;"></div>
<div class="t" style="left:376.6px;top:408.80px;font-size:15px;line-height:15px;color:#2b2b2b;font-weight:normal;transform:scaleX(0.745);-webkit-text-stroke:0.6px #2b2b2b;">SSL Inbound Inspection</div>
<div class="r" style="left:508px;top:403px;width:129px;height:29px;background:#fff;border:1px solid #c9c9c9;border-bottom:none;border-radius:5px 5px 0 0;box-sizing:border-box;"></div>
<div class="t" style="left:518.8px;top:408.80px;font-size:15px;line-height:15px;color:#2b2b2b;font-weight:normal;transform:scaleX(0.745);-webkit-text-stroke:0.6px #2b2b2b;">SSL Protocol Settings</div>
<div class="r" style="left:509px;top:430px;width:127px;height:2px;background:#fff;"></div>
<div class="r" style="left:257px;top:446px;width:698px;height:75px;border:1px solid #cdcdcd;box-sizing:border-box;"></div>
<div class="r" style="left:267px;top:444px;width:102px;height:4px;background:#fff;"></div>
<div class="t" style="left:272.3px;top:440.89px;font-size:11px;line-height:11px;color:#405a74;font-weight:bold;transform:scaleX(0.975);">Protocol Versions</div>
<div class="r" style="left:257px;top:532px;width:698px;height:50px;border:1px solid #cdcdcd;box-sizing:border-box;"></div>
<div class="r" style="left:267px;top:530px;width:143px;height:4px;background:#fff;"></div>
<div class="t" style="left:272.3px;top:526.89px;font-size:11px;line-height:11px;color:#405a74;font-weight:bold;transform:scaleX(0.975);">Key Exchange Algorithms</div>
<div class="r" style="left:257px;top:606px;width:698px;height:75px;border:1px solid #cdcdcd;box-sizing:border-box;"></div>
<div class="r" style="left:267px;top:604px;width:127px;height:4px;background:#fff;"></div>
<div class="t" style="left:272.3px;top:600.89px;font-size:11px;line-height:11px;color:#405a74;font-weight:bold;transform:scaleX(0.975);">Encryption Algorithms</div>
<div class="r" style="left:257px;top:692px;width:698px;height:52px;border:1px solid #cdcdcd;box-sizing:border-box;"></div>
<div class="r" style="left:267px;top:690px;width:149px;height:4px;background:#fff;"></div>
<div class="t" style="left:272.3px;top:686.89px;font-size:11px;line-height:11px;color:#405a74;font-weight:bold;transform:scaleX(0.975);">Authentication Algorithms</div>
<div class="r" style="left:367px;top:462px;width:578px;height:19px;background:#fff;border:1px solid #c9c9c9;box-sizing:border-box;"></div>
<div class="r" style="left:925px;top:462px;width:20px;height:19px;background:#e4e4e4;border:1px solid #c9c9c9;box-sizing:border-box;"></div>
<svg class="r" style="left:925px;top:462px" width="20" height="19"><path d="M4.5 7 L15.5 7 L10 12.5 Z" fill="#7f8e99"/></svg>
<div class="t" style="left:308.6px;top:465.49px;font-size:11px;line-height:11px;color:#333;font-weight:normal;transform:scaleX(0.92);">Min Version</div>
<div class="t" style="left:370.9px;top:467.29px;font-size:11px;line-height:11px;color:#222;font-weight:normal;transform:scaleX(0.92);">TLSv1.0</div>
<div class="r" style="left:367px;top:487px;width:578px;height:19px;background:#fff;border:1px solid #c9c9c9;box-sizing:border-box;"></div>
<div class="r" style="left:925px;top:487px;width:20px;height:19px;background:#e4e4e4;border:1px solid #c9c9c9;box-sizing:border-box;"></div>
<svg class="r" style="left:925px;top:487px" width="20" height="19"><path d="M4.5 7 L15.5 7 L10 12.5 Z" fill="#7f8e99"/></svg>
<div class="t" style="left:306.5px;top:490.49px;font-size:11px;line-height:11px;color:#333;font-weight:normal;transform:scaleX(0.92);">Max Version</div>
<div class="t" style="left:370.9px;top:492.29px;font-size:11px;line-height:11px;color:#222;font-weight:normal;transform:scaleX(0.92);">Max</div>
<svg class="r" style="left:292px;top:551px" width="14" height="14" viewBox="0 0 14 14"><rect x="0.6" y="0.6" width="11.9" height="11.9" rx="1" fill="#fff" stroke="#8393a0" stroke-width="1.1"/><path d="M3.3 6.9 L5.9 9.9 L11.3 2.2" fill="none" stroke="#3f6c8e" stroke-width="2.5" stroke-linejoin="round" stroke-linecap="round"/></svg>
<div class="t" style="left:311.2px;top:552.69px;font-size:11px;line-height:11px;color:#2a2a2a;font-weight:normal;transform:scaleX(0.85);">RSA</div>
<svg class="r" style="left:461px;top:551px" width="14" height="14" viewBox="0 0 14 14"><rect x="0.6" y="0.6" width="11.9" height="11.9" rx="1" fill="#fff" stroke="#8393a0" stroke-width="1.1"/><path d="M3.3 6.9 L5.9 9.9 L11.3 2.2" fill="none" stroke="#3f6c8e" stroke-width="2.5" stroke-linejoin="round" stroke-linecap="round"/></svg>
<div class="t" style="left:480.2px;top:552.69px;font-size:11px;line-height:11px;color:#2a2a2a;font-weight:normal;transform:scaleX(0.85);">DHE</div>
<svg class="r" style="left:629px;top:551px" width="14" height="14" viewBox="0 0 14 14"><rect x="0.6" y="0.6" width="11.9" height="11.9" rx="1" fill="#fff" stroke="#8393a0" stroke-width="1.1"/><path d="M3.3 6.9 L5.9 9.9 L11.3 2.2" fill="none" stroke="#3f6c8e" stroke-width="2.5" stroke-linejoin="round" stroke-linecap="round"/></svg>
<div class="t" style="left:648.2px;top:552.69px;font-size:11px;line-height:11px;color:#2a2a2a;font-weight:normal;transform:scaleX(0.85);">ECDHE</div>
<svg class="r" style="left:292px;top:625px" width="14" height="14" viewBox="0 0 14 14"><rect x="0.6" y="0.6" width="11.9" height="11.9" rx="1" fill="#fff" stroke="#8393a0" stroke-width="1.1"/><path d="M3.3 6.9 L5.9 9.9 L11.3 2.2" fill="none" stroke="#3f6c8e" stroke-width="2.5" stroke-linejoin="round" stroke-linecap="round"/></svg>
<div class="t" style="left:311.2px;top:626.69px;font-size:11px;line-height:11px;color:#2a2a2a;font-weight:normal;transform:scaleX(0.85);">3DES</div>
<svg class="r" style="left:461px;top:625px" width="14" height="14" viewBox="0 0 14 14"><rect x="0.6" y="0.6" width="11.9" height="11.9" rx="1" fill="#fff" stroke="#8393a0" stroke-width="1.1"/><path d="M3.3 6.9 L5.9 9.9 L11.3 2.2" fill="none" stroke="#3f6c8e" stroke-width="2.5" stroke-linejoin="round" stroke-linecap="round"/></svg>
<div class="t" style="left:480.2px;top:626.69px;font-size:11px;line-height:11px;color:#2a2a2a;font-weight:normal;transform:scaleX(0.85);">AES128-CBC</div>
<svg class="r" style="left:629px;top:625px" width="14" height="14" viewBox="0 0 14 14"><rect x="0.6" y="0.6" width="11.9" height="11.9" rx="1" fill="#fff" stroke="#8393a0" stroke-width="1.1"/><path d="M3.3 6.9 L5.9 9.9 L11.3 2.2" fill="none" stroke="#3f6c8e" stroke-width="2.5" stroke-linejoin="round" stroke-linecap="round"/></svg>
<div class="t" style="left:648.2px;top:626.69px;font-size:11px;line-height:11px;color:#2a2a2a;font-weight:normal;transform:scaleX(0.85);">AES128-GCM</div>
<svg class="r" style="left:292px;top:650px" width="14" height="14" viewBox="0 0 14 14"><rect x="0.6" y="0.6" width="11.9" height="11.9" rx="1" fill="#fff" stroke="#8393a0" stroke-width="1.1"/></svg>
<div class="t" style="left:311.2px;top:651.69px;font-size:11px;line-height:11px;color:#2a2a2a;font-weight:normal;transform:scaleX(0.85);">RC4</div>
<svg class="r" style="left:461px;top:650px" width="14" height="14" viewBox="0 0 14 14"><rect x="0.6" y="0.6" width="11.9" height="11.9" rx="1" fill="#fff" stroke="#8393a0" stroke-width="1.1"/><path d="M3.3 6.9 L5.9 9.9 L11.3 2.2" fill="none" stroke="#3f6c8e" stroke-width="2.5" stroke-linejoin="round" stroke-linecap="round"/></svg>
<div class="t" style="left:480.2px;top:651.69px;font-size:11px;line-height:11px;color:#2a2a2a;font-weight:normal;transform:scaleX(0.85);">AES256-CBC</div>
<svg class="r" style="left:629px;top:650px" width="14" height="14" viewBox="0 0 14 14"><rect x="0.6" y="0.6" width="11.9" height="11.9" rx="1" fill="#fff" stroke="#8393a0" stroke-width="1.1"/><path d="M3.3 6.9 L5.9 9.9 L11.3 2.2" fill="none" stroke="#3f6c8e" stroke-width="2.5" stroke-linejoin="round" stroke-linecap="round"/></svg>
<div class="t" style="left:648.2px;top:651.69px;font-size:11px;line-height:11px;color:#2a2a2a;font-weight:normal;transform:scaleX(0.85);">AES256-GCM</div>
<svg class="r" style="left:292px;top:712px" width="14" height="14" viewBox="0 0 14 14"><rect x="0.6" y="0.6" width="11.9" height="11.9" rx="1" fill="#fff" stroke="#d0d0d0" stroke-width="1.1"/></svg>
<div class="t" style="left:311.2px;top:713.69px;font-size:11px;line-height:11px;color:#b0b0b0;font-weight:normal;transform:scaleX(0.85);">MD5</div>
<svg class="r" style="left:462px;top:712px" width="14" height="14" viewBox="0 0 14 14"><rect x="0.6" y="0.6" width="11.9" height="11.9" rx="1" fill="#fff" stroke="#8393a0" stroke-width="1.1"/><path d="M3.3 6.9 L5.9 9.9 L11.3 2.2" fill="none" stroke="#3f6c8e" stroke-width="2.5" stroke-linejoin="round" stroke-linecap="round"/></svg>
<div class="t" style="left:481.2px;top:713.69px;font-size:11px;line-height:11px;color:#2a2a2a;font-weight:normal;transform:scaleX(0.85);">SHA1</div>
<svg class="r" style="left:631px;top:712px" width="14" height="14" viewBox="0 0 14 14"><rect x="0.6" y="0.6" width="11.9" height="11.9" rx="1" fill="#fff" stroke="#8393a0" stroke-width="1.1"/><path d="M3.3 6.9 L5.9 9.9 L11.3 2.2" fill="none" stroke="#3f6c8e" stroke-width="2.5" stroke-linejoin="round" stroke-linecap="round"/></svg>
<div class="t" style="left:650.2px;top:713.69px;font-size:11px;line-height:11px;color:#2a2a2a;font-weight:normal;transform:scaleX(0.85);">SHA256</div>
<svg class="r" style="left:800px;top:712px" width="14" height="14" viewBox="0 0 14 14"><rect x="0.6" y="0.6" width="11.9" height="11.9" rx="1" fill="#fff" stroke="#8393a0" stroke-width="1.1"/><path d="M3.3 6.9 L5.9 9.9 L11.3 2.2" fill="none" stroke="#3f6c8e" stroke-width="2.5" stroke-linejoin="round" stroke-linecap="round"/></svg>
<div class="t" style="left:819.2px;top:713.69px;font-size:11px;line-height:11px;color:#2a2a2a;font-weight:normal;transform:scaleX(0.85);">SHA384</div>
<svg class="r" style="left:250px;top:580px" width="305" height="32" viewBox="250 580 305 32"><path d="M253.5 583.5 L300 583.2 L400 584.5 L520 586.3 L549 586.5 L549.3 607.6 L527 607.8 L520 606.5 L400 606.6 L360 603.5 L253.5 603 Z" fill="#fbfb00"/></svg>
<div class="t" style="left:257.2px;top:588.76px;font-size:9.5px;line-height:9.5px;color:#74741a;font-weight:normal;transform:scaleX(0.88);">Note: DHE and ECDHE algorithms are supported only for SSL Forward Proxy</div>
<div class="t" style="left:272.3px;top:600.89px;font-size:11px;line-height:11px;color:#405a74;font-weight:bold;transform:scaleX(0.975);">Encryption Algorithms</div>
<div class="t" style="left:240.0px;top:778.56px;font-size:9.5px;line-height:9.5px;color:#707070;font-weight:normal;transform:scaleX(0.896);">Note: For unsupported modes and failures, the session information is cached for 12 hours, so future sessions between the same host and server pair are not decrypted. Check boxes to block</div>
<div class="t" style="left:240.0px;top:790.56px;font-size:9.5px;line-height:9.5px;color:#707070;font-weight:normal;transform:scaleX(0.896);">those sessions instead.</div>
<div class="r" style="left:829px;top:809px;width:67px;height:26px;background:#6aa1bb;border:2px solid #f4f7f9;border-radius:4px;box-sizing:border-box;"></div>
<div class="r" style="left:902px;top:809px;width:68px;height:26px;background:#bfc3c9;border:2px solid #f4f7f9;border-radius:4px;box-sizing:border-box;"></div>
<div class="t" style="left:856.0px;top:816.14px;font-size:12px;line-height:12px;color:#1e1e1e;font-weight:normal;transform:scaleX(0.86);">OK</div>
<div class="t" style="left:920.5px;top:816.14px;font-size:12px;line-height:12px;color:#1e1e1e;font-weight:normal;transform:scaleX(0.84);">Cancel</div>
</body></html>
